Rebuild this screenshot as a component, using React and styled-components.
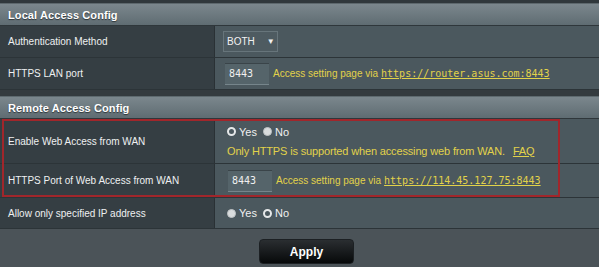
import React from 'react';
import styled, { createGlobalStyle } from "styled-components";

const GlobalStyle = createGlobalStyle`
   html, body
   {
       margin:0;
       padding:0;
       background:#4b5358;
       font-family:Arial, "Liberation Sans", sans-serif;
   }
`;

const Page = styled.div`
   width:599px;
   height:267px;
   overflow:hidden;
   background:#4b5358;
   position:relative;
`;

const TopStrip = styled.div`
   height:3px;
   background:#30383c;
   border-bottom:1px solid #5d686d;
`;

const Gap = styled.div`
   height:6px;
   background:#343b3f;
   border-bottom:1px solid #5e6a6f;
`;

const Header = styled.div`
   height:21px;
   display:flex;
   align-items:center;
   padding-left:8px;
   background:linear-gradient(#7b878d, #5f6c72);
   color:#fff;
   font-weight:bold;
   font-size:11px;
   letter-spacing:0.1px;
   text-shadow:0 1px 1px #2d3438;
   border-bottom:1px solid #2f373b;
`;

const Row = styled.div`
   display:grid;
   grid-template-columns: 215px 1fr;
   height:${ p => p.h }px;
   border-bottom:1px solid #2c3438;
`;

const Label = styled.div`
   background:#353e43;
   border-right:1px solid #2a3135;
   color:#eef0f1;
   font-size:10px;
   display:flex;
   align-items:center;
   padding-left:8px;
`;

const Value = styled.div`
   background:#4b585e;
   display:flex;
   flex-direction:${ p => p.col ? "column" : "row" };
   justify-content:${ p => p.col ? "center" : "flex-start" };
   align-items:${ p => p.col ? "flex-start" : "center" };
   gap:${ p => p.col ? "7px" : "0" };
   padding-left:${ p => p.pad }px;
`;

const Select = styled.div`
   width:55px;
   height:21px;
   border:1px solid #67757b;
   background:#4e5b61;
   color:#f2f2f2;
   font-size:10px;
   display:flex;
   align-items:center;
   padding-left:3px;
   box-sizing:border-box;

   span
   {
       margin-left:12px;
       font-size:8px;
   }
`;

const PortInput = styled.div`
   width:44px;
   height:22px;
   background:#55646a;
   border-top:1px solid #3a4449;
   border-bottom:1px solid #76858b;
   box-sizing:border-box;
   color:#f0f0f0;
   font-family:"DejaVu Sans Mono", monospace;
   font-size:10px;
   display:flex;
   align-items:center;
   padding-left:4px;
   margin-right:4px;
`;

const Note = styled.span`
   color:#e2d24a;
   font-size:${ p => p.big ? 11 : 10 }px;
   letter-spacing:${ p => p.big ? "-0.15px" : "0" };

   a
   {
       color:#e2d24a;
       text-decoration:underline;
   }
`;

const Url = styled.a`
   font-family:"DejaVu Sans Mono", "Liberation Mono", monospace;
   font-size:10px;
   margin-left:3px;
`;

const Faq = styled.a`
   margin-left:8px;
`;

const Radios = styled.div`
   display:flex;
   align-items:center;
   color:#f0f0f0;
   font-size:11px;
`;

const Radio = styled.span`
   width:9px;
   height:9px;
   border-radius:50%;
   box-sizing:border-box;
   margin-right:3px;
   background:${ p => p.on ? "#4b585e" : "#d9dcdd" };
   border:${ p => p.on ? "2px solid #e6e8e9" : "1px solid #c0c4c6" };
`;

const Choice = styled.span`
   margin-right:6px;
`;

const RedBox = styled.div`
   position:absolute;
   left:2px;
   top:119px;
   width:558px;
   height:78px;
   border:2px solid #a1262b;
   box-sizing:border-box;
   pointer-events:none;
`;

const Footer = styled.div`
   display:flex;
   justify-content:center;
   padding-top:10px;
   padding-left:14px;
`;

const Apply = styled.button`
   width:95px;
   height:25px;
   border:1px solid #1c2023;
   border-radius:4px;
   background:linear-gradient(#2a2e31, #07090a);
   color:#fff;
   font-family:Arial, "Liberation Sans", sans-serif;
   font-weight:bold;
   font-size:12px;
`;

function YesNo ( { yes } )
{
    return (
        <Radios>
            <Radio on={ yes } /><Choice>Yes</Choice>
            <Radio on={ !yes } /><span>No</span>
        </Radios>
    );
}

function App ()
{
    return (
        <Page>
            <GlobalStyle />
            <TopStrip />
            <Header>Local Access Config</Header>
            <Row h={ 31 }>
                <Label>Authentication Method</Label>
                <Value pad={ 8 }>
                    <Select>BOTH<span>▼</span></Select>
                </Value>
            </Row>
            <Row h={ 31 }>
                <Label>HTTPS LAN port</Label>
                <Value pad={ 10 }>
                    <PortInput>8443</PortInput>
                    <Note>Access setting page via<Url href="#">https://router.asus.com:8443</Url></Note>
                </Value>
            </Row>
            <Gap />
            <Header>Remote Access Config</Header>
            <Row h={ 44 }>
                <Label>Enable Web Access from WAN</Label>
                <Value col pad={ 12 }>
                    <YesNo yes />
                    <Note big>Only HTTPS is supported when accessing web from WAN.<Faq href="#">FAQ</Faq></Note>
                </Value>
            </Row>
            <Row h={ 33 }>
                <Label>HTTPS Port of Web Access from WAN</Label>
                <Value pad={ 13 }>
                    <PortInput>8443</PortInput>
                    <Note>Access setting page via<Url href="#">https://114.45.127.75:8443</Url></Note>
                </Value>
            </Row>
            <Row h={ 30 }>
                <Label>Allow only specified IP address</Label>
                <Value pad={ 12 }>
                    <YesNo />
                </Value>
            </Row>
            <Footer>
                <Apply>Apply</Apply>
            </Footer>
            <RedBox />
        </Page>
    );
}

export default App;
